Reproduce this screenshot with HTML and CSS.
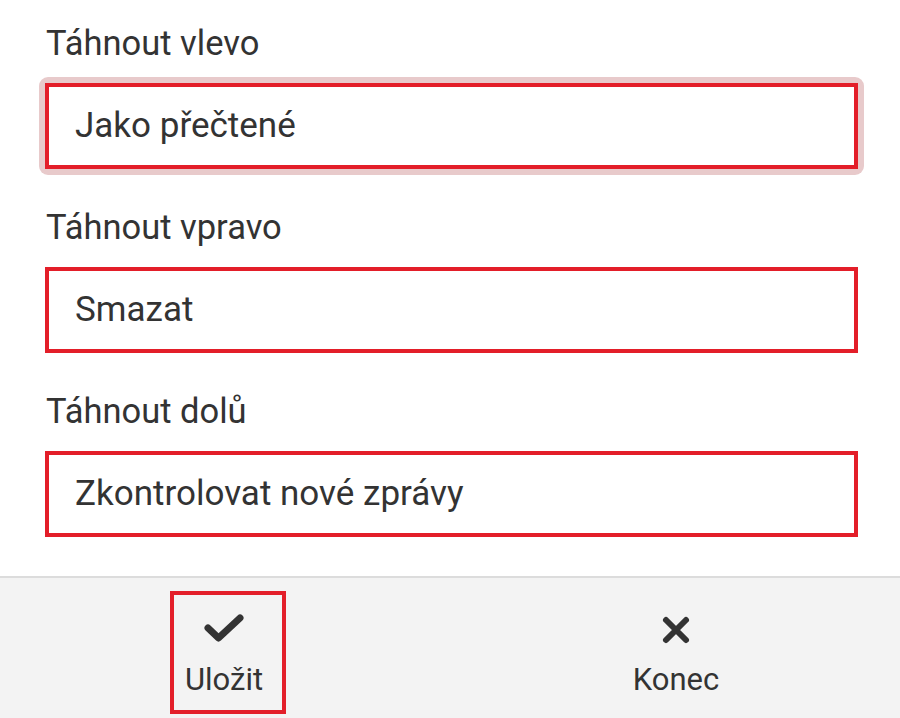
FILE: index.html
```html
<!DOCTYPE html>
<html lang="cs">
<head>
<meta charset="utf-8">
<title>Gesta</title>
<link rel="stylesheet" href="styles.css">
</head>
<body>
<div class="page">
  <main class="form">
    <div class="field">
      <div class="label">Táhnout vlevo</div>
      <div class="input focused">Jako přečtené</div>
    </div>
    <div class="field">
      <div class="label">Táhnout vpravo</div>
      <div class="input">Smazat</div>
    </div>
    <div class="field">
      <div class="label">Táhnout dolů</div>
      <div class="input">Zkontrolovat nové zprávy</div>
    </div>
  </main>
  <footer class="footer">
    <div class="slot first">
      <button class="action marked">
        <svg class="icon check" viewBox="0 0 42 30" width="42" height="30"><path d="M5 15 L15.5 25 L37 5" fill="none" stroke="#333" stroke-width="7" stroke-linecap="round" stroke-linejoin="round"/></svg>
        <span class="action-text">Uložit</span>
      </button>
    </div>
    <div class="slot">
      <button class="action">
        <svg class="icon cross" viewBox="0 0 30 30" width="30" height="30"><path d="M5 5 L25 25 M25 5 L5 25" fill="none" stroke="#333" stroke-width="6" stroke-linecap="round"/></svg>
        <span class="action-text">Konec</span>
      </button>
    </div>
  </footer>
</div>
</body>
</html>
```
FILE: styles.css
```css
* { box-sizing: border-box; }
html, body { margin: 0; padding: 0; background: #fff; }
body {
  font-family: Roboto, "Noto Sans", "Liberation Sans", sans-serif;
  color: #333;
}
.page {
  width: 900px;
  height: 718px;
  display: flex;
  flex-direction: column;
  overflow: hidden;
}
.form {
  flex: 1;
  padding: 23px 42px 0 45px;
  display: flex;
  flex-direction: column;
  gap: 38px;
}
.field {
  display: flex;
  flex-direction: column;
  gap: 20px;
}
.field:first-child { position: relative; z-index: 0; }
.label {
  font-size: 34.5px;
  line-height: 40px;
  padding-left: 1px;
}
.input {
  position: relative;
  height: 86px;
  border: 4px solid #e31e29;
  background: #fff;
  font-size: 35px;
  line-height: 78px;
  padding-left: 26px;
}
.input.focused::before {
  content: "";
  position: absolute;
  inset: -10px;
  border-radius: 9px;
  background: #e8cacb;
  z-index: -1;
}
.footer {
  height: 142px;
  border-top: 2px solid #dcdcdc;
  background: #f3f3f3;
  display: flex;
}
.slot {
  flex: 1;
  display: flex;
  justify-content: center;
  padding-top: 13px;
}
.slot.first { padding-left: 4px; }
.action {
  width: 116px;
  height: 123px;
  border: 4px solid transparent;
  background: transparent;
  padding: 0;
  display: flex;
  flex-direction: column;
  align-items: center;
  font-family: inherit;
  color: #333;
}
.action.marked { border-color: #e31e29; padding-right: 8px; }
.icon { display: block; }
.check { margin-top: 18px; }
.cross { margin-top: 20px; }
.action-text {
  font-size: 31px;
  line-height: 36px;
  margin-top: 19px;
}
.cross + .action-text { margin-top: 17px; }
```
